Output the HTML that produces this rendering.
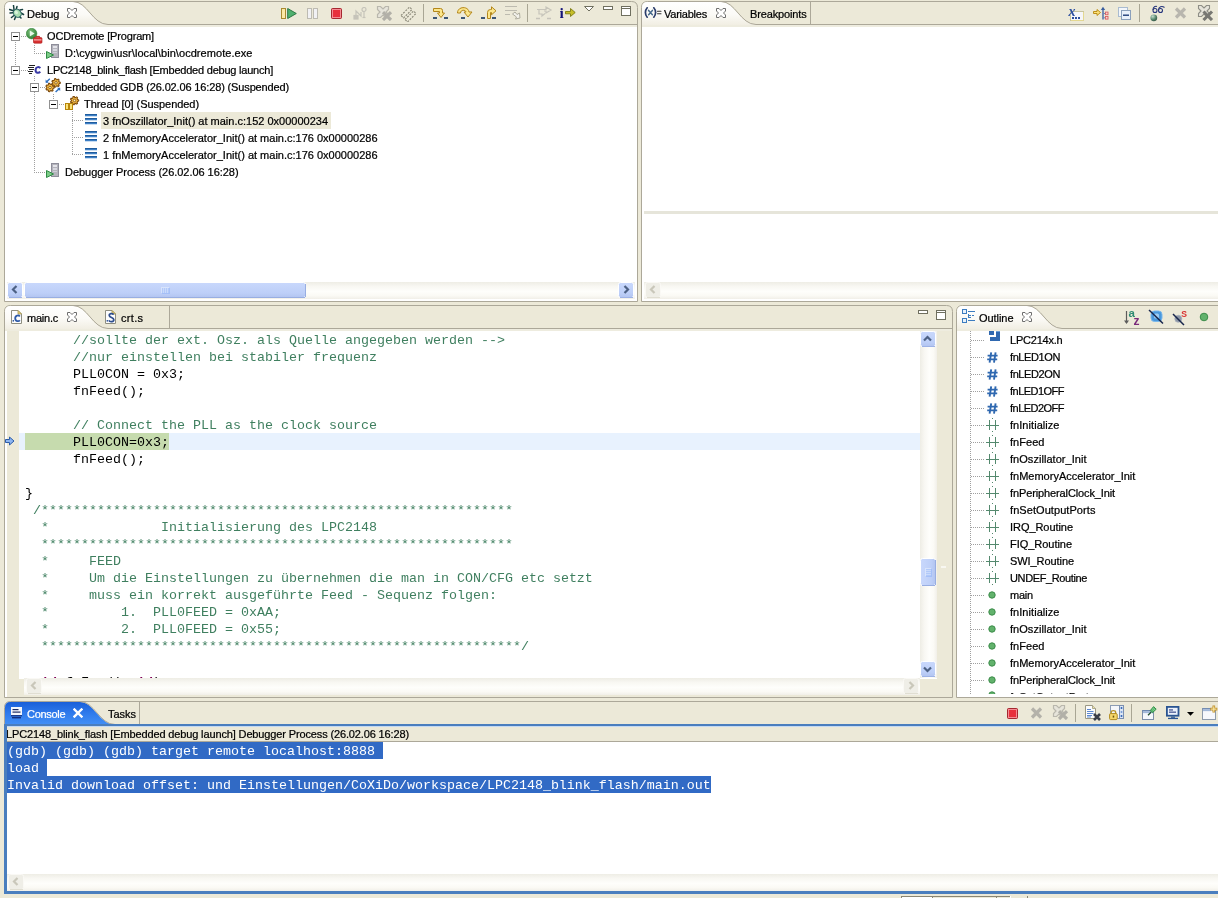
<!DOCTYPE html>
<html><head><meta charset="utf-8"><title>Debug - Eclipse</title>
<style>
html,body{margin:0;padding:0;}
body{width:1218px;height:898px;overflow:hidden;background:#ECE9D8;position:relative;font-family:"Liberation Sans",sans-serif;font-size:11px;color:#000;}
div,span,svg{position:absolute;box-sizing:border-box;}
.t{white-space:pre;line-height:13px;font-size:11px;-webkit-text-stroke:0.22px currentColor;}
.m{white-space:pre;font-family:"Liberation Mono",monospace;font-size:13.333px;line-height:17px;}
.panel{border:1px solid #ACA899;background:#fff;}
</style></head><body><div id="root" style="left:0;top:0;width:1218px;height:898px;will-change:transform;">
<svg width="0" height="0" style="left:0;top:0"><defs><linearGradient id="tg" x1="0" y1="0" x2="0" y2="1"><stop offset="0" stop-color="#ffffff"/><stop offset="0.55" stop-color="#FBFAF6"/><stop offset="1" stop-color="#F1EEE3"/></linearGradient><linearGradient id="bg" x1="0" y1="0" x2="0" y2="1"><stop offset="0" stop-color="#1A5FD9"/><stop offset="0.5" stop-color="#2F7BEC"/><stop offset="1" stop-color="#4390F6"/></linearGradient></defs></svg>
<svg style="left:4px;top:1px" width="634" height="301" viewBox="0 0 634 301"><path d="M0.5,300.5 L0.5,6.5 Q0.5,0.5 6.5,0.5 L627.5,0.5 Q633.5,0.5 633.5,6.5 L633.5,300.5 Z" fill="#ECE9D8" stroke="#ACA899" stroke-width="1"/><rect x="1" y="24" width="632" height="276" fill="#fff"/><rect x="1" y="24" width="632" height="2" fill="#EEECDF"/><path d="M1,24 L1,6.5 Q1,1 6.5,1 L69,1 C83,1 88,23.5 104,23.5 L104,24 Z" fill="url(#tg)"/><path d="M69,0.5 C83.5,0.5 88.5,23.5 104,23.5 L636,23.5" fill="none" stroke="#ACA899" stroke-width="1"/></svg>
<svg style="left:641px;top:1px" width="577" height="301" viewBox="0 0 577 301"><path d="M579,0.5 L6.5,0.5 Q0.5,0.5 0.5,6.5 L0.5,300.5 L579,300.5" fill="#ECE9D8" stroke="#ACA899" stroke-width="1"/><rect x="1" y="24" width="577" height="276" fill="#fff"/><rect x="1" y="24" width="577" height="2" fill="#EEECDF"/><path d="M1,24 L1,6.5 Q1,1 6.5,1 L80,1 C94,1 99,23.5 115,23.5 L115,24 Z" fill="url(#tg)"/><path d="M80,0.5 C94.5,0.5 99.5,23.5 115,23.5 L579,23.5" fill="none" stroke="#ACA899" stroke-width="1"/></svg>
<svg style="left:4px;top:305px" width="949" height="393" viewBox="0 0 949 393"><path d="M0.5,392.5 L0.5,6.5 Q0.5,0.5 6.5,0.5 L942.5,0.5 Q948.5,0.5 948.5,6.5 L948.5,392.5 Z" fill="#ECE9D8" stroke="#ACA899" stroke-width="1"/><rect x="1" y="24" width="947" height="368" fill="#fff"/><rect x="1" y="24" width="947" height="2" fill="#EEECDF"/><path d="M1,24 L1,6.5 Q1,1 6.5,1 L69,1 C83,1 88,23.5 104,23.5 L104,24 Z" fill="url(#tg)"/><path d="M69,0.5 C83.5,0.5 88.5,23.5 104,23.5 L951,23.5" fill="none" stroke="#ACA899" stroke-width="1"/></svg>
<svg style="left:956px;top:305px" width="262" height="393" viewBox="0 0 262 393"><path d="M264,0.5 L6.5,0.5 Q0.5,0.5 0.5,6.5 L0.5,392.5 L264,392.5" fill="#ECE9D8" stroke="#ACA899" stroke-width="1"/><rect x="1" y="24" width="262" height="368" fill="#fff"/><rect x="1" y="24" width="262" height="2" fill="#EEECDF"/><path d="M1,24 L1,6.5 Q1,1 6.5,1 L71,1 C85,1 90,23.5 106,23.5 L106,24 Z" fill="url(#tg)"/><path d="M71,0.5 C85.5,0.5 90.5,23.5 106,23.5 L264,23.5" fill="none" stroke="#ACA899" stroke-width="1"/></svg>
<svg style="left:4px;top:701px" width="1214" height="193" viewBox="0 0 1214 193"><path d="M1216,0.5 L6.5,0.5 Q0.5,0.5 0.5,6.5 L0.5,192.5 L1216,192.5" fill="#ECE9D8" stroke="#ACA899" stroke-width="1"/><rect x="1" y="24" width="1214" height="168" fill="#fff"/><rect x="1" y="24" width="1214" height="2" fill="#EEECDF"/><path d="M1,24 L1,6.5 Q1,1 6.5,1 L76,1 C90,1 95,23.5 111,23.5 L111,24 Z" fill="url(#bg)"/><path d="M76,0.5 C90.5,0.5 95.5,23.5 111,23.5 L1216,23.5" fill="none" stroke="#ACA899" stroke-width="1"/></svg>
<span class="t" style="left:27px;top:8px;">Debug</span>
<svg style="left:67px;top:8px" width="10" height="10" viewBox="0 0 10 10"><path d="M0.5,0.5 H3 L5,2.5 L7,0.5 H9.5 V3 L7.5,5 L9.5,7 V9.5 H7 L5,7.5 L3,9.5 H0.5 V7 L2.5,5 L0.5,3 Z" fill="#fff" stroke="#6E6E6E" stroke-width="1" transform="scale(1.0)"/></svg>
<span class="t" style="left:664px;top:8px;letter-spacing:-0.227px;">Variables</span>
<svg style="left:716px;top:8px" width="10" height="10" viewBox="0 0 10 10"><path d="M0.5,0.5 H3 L5,2.5 L7,0.5 H9.5 V3 L7.5,5 L9.5,7 V9.5 H7 L5,7.5 L3,9.5 H0.5 V7 L2.5,5 L0.5,3 Z" fill="#fff" stroke="#6E6E6E" stroke-width="1" transform="scale(1.0)"/></svg>
<span class="t" style="left:750px;top:8px;letter-spacing:-0.145px;">Breakpoints</span>
<div style="left:810px;top:2px;width:1px;height:22px;background:#ACA899;"></div>
<span class="t" style="left:27px;top:312px;letter-spacing:-0.234px;">main.c</span>
<svg style="left:67px;top:312px" width="10" height="10" viewBox="0 0 10 10"><path d="M0.5,0.5 H3 L5,2.5 L7,0.5 H9.5 V3 L7.5,5 L9.5,7 V9.5 H7 L5,7.5 L3,9.5 H0.5 V7 L2.5,5 L0.5,3 Z" fill="#fff" stroke="#6E6E6E" stroke-width="1" transform="scale(1.0)"/></svg>
<span class="t" style="left:121px;top:312px;letter-spacing:0.304px;">crt.s</span>
<div style="left:169px;top:306px;width:1px;height:22px;background:#ACA899;"></div>
<span class="t" style="left:979px;top:312px;letter-spacing:-0.051px;">Outline</span>
<svg style="left:1022px;top:312px" width="10" height="10" viewBox="0 0 10 10"><path d="M0.5,0.5 H3 L5,2.5 L7,0.5 H9.5 V3 L7.5,5 L9.5,7 V9.5 H7 L5,7.5 L3,9.5 H0.5 V7 L2.5,5 L0.5,3 Z" fill="#fff" stroke="#6E6E6E" stroke-width="1" transform="scale(1.0)"/></svg>
<span class="t" style="left:27px;top:708px;color:#fff;letter-spacing:-0.294px;">Console</span>
<svg style="left:73px;top:708px" width="10" height="10" viewBox="0 0 10 10"><path d="M1.5,1.5 L8.5,8.5 M8.5,1.5 L1.5,8.5" stroke="#fff" stroke-width="2.4" stroke-linecap="square"/></svg>
<span class="t" style="left:108px;top:708px;letter-spacing:-0.025px;">Tasks</span>
<div style="left:139px;top:702px;width:1px;height:22px;background:#ACA899;"></div>
<div style="left:101px;top:112px;width:230px;height:17px;background:#ECE9D8;"></div>
<span class="t" style="left:47px;top:30px;letter-spacing:-0.16px;">OCDremote [Program]</span>
<span class="t" style="left:65px;top:47px;letter-spacing:0.061px;">D:\cygwin\usr\local\bin\ocdremote.exe</span>
<span class="t" style="left:47px;top:64px;letter-spacing:-0.22px;">LPC2148_blink_flash [Embedded debug launch]</span>
<span class="t" style="left:65px;top:81px;letter-spacing:-0.145px;">Embedded GDB (26.02.06 16:28) (Suspended)</span>
<span class="t" style="left:84px;top:98px;letter-spacing:-0.054px;">Thread [0] (Suspended)</span>
<span class="t" style="left:103px;top:115px;">3 fnOszillator_Init() at main.c:152 0x00000234</span>
<span class="t" style="left:103px;top:132px;">2 fnMemoryAccelerator_Init() at main.c:176 0x00000286</span>
<span class="t" style="left:103px;top:149px;">1 fnMemoryAccelerator_Init() at main.c:176 0x00000286</span>
<span class="t" style="left:65px;top:166px;letter-spacing:-0.042px;">Debugger Process (26.02.06 16:28)</span>
<svg style="left:11px;top:32px" width="9" height="9" viewBox="0 0 9 9" shape-rendering="crispEdges"><rect x="0.5" y="0.5" width="8" height="8" fill="#fff" stroke="#919191"/><rect x="2" y="4" width="5" height="1" fill="#000"/></svg>
<svg style="left:11px;top:66px" width="9" height="9" viewBox="0 0 9 9" shape-rendering="crispEdges"><rect x="0.5" y="0.5" width="8" height="8" fill="#fff" stroke="#919191"/><rect x="2" y="4" width="5" height="1" fill="#000"/></svg>
<svg style="left:30px;top:83px" width="9" height="9" viewBox="0 0 9 9" shape-rendering="crispEdges"><rect x="0.5" y="0.5" width="8" height="8" fill="#fff" stroke="#919191"/><rect x="2" y="4" width="5" height="1" fill="#000"/></svg>
<svg style="left:49px;top:100px" width="9" height="9" viewBox="0 0 9 9" shape-rendering="crispEdges"><rect x="0.5" y="0.5" width="8" height="8" fill="#fff" stroke="#919191"/><rect x="2" y="4" width="5" height="1" fill="#000"/></svg>
<div style="left:21px;top:36px;width:8px;height:1px;background:repeating-linear-gradient(90deg,#A0A0A0 0 1px,transparent 1px 2px);"></div>
<div style="left:21px;top:70px;width:8px;height:1px;background:repeating-linear-gradient(90deg,#A0A0A0 0 1px,transparent 1px 2px);"></div>
<div style="left:40px;top:87px;width:6px;height:1px;background:repeating-linear-gradient(90deg,#A0A0A0 0 1px,transparent 1px 2px);"></div>
<div style="left:59px;top:104px;width:6px;height:1px;background:repeating-linear-gradient(90deg,#A0A0A0 0 1px,transparent 1px 2px);"></div>
<div style="left:15px;top:42px;width:1px;height:24px;background:repeating-linear-gradient(180deg,#A0A0A0 0 1px,transparent 1px 2px);"></div>
<div style="left:34px;top:45px;width:1px;height:8px;background:repeating-linear-gradient(180deg,#A0A0A0 0 1px,transparent 1px 2px);"></div>
<div style="left:34px;top:53px;width:12px;height:1px;background:repeating-linear-gradient(90deg,#A0A0A0 0 1px,transparent 1px 2px);"></div>
<div style="left:34px;top:76px;width:1px;height:6px;background:repeating-linear-gradient(180deg,#A0A0A0 0 1px,transparent 1px 2px);"></div>
<div style="left:34px;top:92px;width:1px;height:80px;background:repeating-linear-gradient(180deg,#A0A0A0 0 1px,transparent 1px 2px);"></div>
<div style="left:34px;top:172px;width:12px;height:1px;background:repeating-linear-gradient(90deg,#A0A0A0 0 1px,transparent 1px 2px);"></div>
<div style="left:53px;top:94px;width:1px;height:6px;background:repeating-linear-gradient(180deg,#A0A0A0 0 1px,transparent 1px 2px);"></div>
<div style="left:72px;top:111px;width:1px;height:44px;background:repeating-linear-gradient(180deg,#A0A0A0 0 1px,transparent 1px 2px);"></div>
<div style="left:72px;top:120px;width:12px;height:1px;background:repeating-linear-gradient(90deg,#A0A0A0 0 1px,transparent 1px 2px);"></div>
<div style="left:72px;top:137px;width:12px;height:1px;background:repeating-linear-gradient(90deg,#A0A0A0 0 1px,transparent 1px 2px);"></div>
<div style="left:72px;top:154px;width:12px;height:1px;background:repeating-linear-gradient(90deg,#A0A0A0 0 1px,transparent 1px 2px);"></div>
<div style="left:7px;top:331px;width:12px;height:348px;background:#ECE9D8;"></div>
<div style="left:937px;top:331px;width:15px;height:366px;background:#ECE9D8;"></div>
<div style="left:7px;top:679px;width:930px;height:18px;background:#ECE9D8;"></div>
<div style="left:19px;top:433px;width:901px;height:17px;background:#E8F2FE;"></div>
<div style="left:25px;top:433px;width:144px;height:17px;background:#C6DBAE;"></div>
<span class="m" style="left:25px;top:332px;color:#3F7F5F;">      //sollte der ext. Osz. als Quelle angegeben werden --&gt;</span>
<span class="m" style="left:25px;top:349px;color:#3F7F5F;">      //nur einstellen bei stabiler frequenz</span>
<span class="m" style="left:25px;top:366px;color:#000;">      PLL0CON = 0x3;</span>
<span class="m" style="left:25px;top:383px;color:#000;">      fnFeed();</span>
<span class="m" style="left:25px;top:417px;color:#3F7F5F;">      // Connect the PLL as the clock source</span>
<span class="m" style="left:25px;top:434px;color:#000;">      PLL0CON=0x3;</span>
<span class="m" style="left:25px;top:451px;color:#000;">      fnFeed();</span>
<span class="m" style="left:25px;top:485px;color:#000;">}</span>
<span class="m" style="left:25px;top:502px;color:#3F7F5F;"> /***********************************************************</span>
<span class="m" style="left:25px;top:519px;color:#3F7F5F;">  *              Initialisierung des LPC2148</span>
<span class="m" style="left:25px;top:536px;color:#3F7F5F;">  ***********************************************************</span>
<span class="m" style="left:25px;top:553px;color:#3F7F5F;">  *     FEED</span>
<span class="m" style="left:25px;top:570px;color:#3F7F5F;">  *     Um die Einstellungen zu übernehmen die man in CON/CFG etc setzt</span>
<span class="m" style="left:25px;top:587px;color:#3F7F5F;">  *     muss ein korrekt ausgeführte Feed - Sequenz folgen:</span>
<span class="m" style="left:25px;top:604px;color:#3F7F5F;">  *         1.  PLL0FEED = 0xAA;</span>
<span class="m" style="left:25px;top:621px;color:#3F7F5F;">  *         2.  PLL0FEED = 0x55;</span>
<span class="m" style="left:25px;top:638px;color:#3F7F5F;">  ************************************************************/</span>
<div style="left:25px;top:672px;width:400px;height:7px;overflow:hidden;"><span class="m" style="left:0;top:2px;"><b style="color:#7F0055">void</b> fnFeed(<b style="color:#7F0055">void</b>)</span></div>
<span class="t" style="left:1010px;top:334px;letter-spacing:-0.215px;">LPC214x.h</span>
<span class="t" style="left:1010px;top:351px;letter-spacing:-0.4px;">fnLED1ON</span>
<span class="t" style="left:1010px;top:368px;letter-spacing:-0.4px;">fnLED2ON</span>
<span class="t" style="left:1010px;top:385px;letter-spacing:-0.521px;">fnLED1OFF</span>
<span class="t" style="left:1010px;top:402px;letter-spacing:-0.521px;">fnLED2OFF</span>
<span class="t" style="left:1010px;top:419px;letter-spacing:0.048px;">fnInitialize</span>
<span class="t" style="left:1010px;top:436px;letter-spacing:0.042px;">fnFeed</span>
<span class="t" style="left:1010px;top:453px;letter-spacing:0.04px;">fnOszillator_Init</span>
<span class="t" style="left:1010px;top:470px;">fnMemoryAccelerator_Init</span>
<span class="t" style="left:1010px;top:487px;letter-spacing:-0.119px;">fnPeripheralClock_Init</span>
<span class="t" style="left:1010px;top:504px;letter-spacing:0.069px;">fnSetOutputPorts</span>
<span class="t" style="left:1010px;top:521px;letter-spacing:-0.054px;">IRQ_Routine</span>
<span class="t" style="left:1010px;top:538px;letter-spacing:-0.034px;">FIQ_Routine</span>
<span class="t" style="left:1010px;top:555px;letter-spacing:-0.074px;">SWI_Routine</span>
<span class="t" style="left:1010px;top:572px;letter-spacing:-0.379px;">UNDEF_Routine</span>
<span class="t" style="left:1010px;top:589px;letter-spacing:-0.211px;">main</span>
<span class="t" style="left:1010px;top:606px;letter-spacing:0.048px;">fnInitialize</span>
<span class="t" style="left:1010px;top:623px;letter-spacing:0.04px;">fnOszillator_Init</span>
<span class="t" style="left:1010px;top:640px;letter-spacing:0.042px;">fnFeed</span>
<span class="t" style="left:1010px;top:657px;">fnMemoryAccelerator_Init</span>
<span class="t" style="left:1010px;top:674px;letter-spacing:-0.119px;">fnPeripheralClock_Init</span>
<div style="left:960px;top:688px;width:250px;height:6px;overflow:hidden;"><span class="t" style="left:50px;top:3px;">fnSetOutputPorts</span></div>
<div style="left:970px;top:331px;width:1px;height:364px;background:repeating-linear-gradient(180deg,#A0A0A0 0 1px,transparent 1px 2px);"></div>
<div style="left:971px;top:340px;width:14px;height:1px;background:repeating-linear-gradient(90deg,#A0A0A0 0 1px,transparent 1px 2px);"></div>
<div style="left:971px;top:357px;width:14px;height:1px;background:repeating-linear-gradient(90deg,#A0A0A0 0 1px,transparent 1px 2px);"></div>
<div style="left:971px;top:374px;width:14px;height:1px;background:repeating-linear-gradient(90deg,#A0A0A0 0 1px,transparent 1px 2px);"></div>
<div style="left:971px;top:391px;width:14px;height:1px;background:repeating-linear-gradient(90deg,#A0A0A0 0 1px,transparent 1px 2px);"></div>
<div style="left:971px;top:408px;width:14px;height:1px;background:repeating-linear-gradient(90deg,#A0A0A0 0 1px,transparent 1px 2px);"></div>
<div style="left:971px;top:425px;width:14px;height:1px;background:repeating-linear-gradient(90deg,#A0A0A0 0 1px,transparent 1px 2px);"></div>
<div style="left:971px;top:442px;width:14px;height:1px;background:repeating-linear-gradient(90deg,#A0A0A0 0 1px,transparent 1px 2px);"></div>
<div style="left:971px;top:459px;width:14px;height:1px;background:repeating-linear-gradient(90deg,#A0A0A0 0 1px,transparent 1px 2px);"></div>
<div style="left:971px;top:476px;width:14px;height:1px;background:repeating-linear-gradient(90deg,#A0A0A0 0 1px,transparent 1px 2px);"></div>
<div style="left:971px;top:493px;width:14px;height:1px;background:repeating-linear-gradient(90deg,#A0A0A0 0 1px,transparent 1px 2px);"></div>
<div style="left:971px;top:510px;width:14px;height:1px;background:repeating-linear-gradient(90deg,#A0A0A0 0 1px,transparent 1px 2px);"></div>
<div style="left:971px;top:527px;width:14px;height:1px;background:repeating-linear-gradient(90deg,#A0A0A0 0 1px,transparent 1px 2px);"></div>
<div style="left:971px;top:544px;width:14px;height:1px;background:repeating-linear-gradient(90deg,#A0A0A0 0 1px,transparent 1px 2px);"></div>
<div style="left:971px;top:561px;width:14px;height:1px;background:repeating-linear-gradient(90deg,#A0A0A0 0 1px,transparent 1px 2px);"></div>
<div style="left:971px;top:578px;width:14px;height:1px;background:repeating-linear-gradient(90deg,#A0A0A0 0 1px,transparent 1px 2px);"></div>
<div style="left:971px;top:595px;width:14px;height:1px;background:repeating-linear-gradient(90deg,#A0A0A0 0 1px,transparent 1px 2px);"></div>
<div style="left:971px;top:612px;width:14px;height:1px;background:repeating-linear-gradient(90deg,#A0A0A0 0 1px,transparent 1px 2px);"></div>
<div style="left:971px;top:629px;width:14px;height:1px;background:repeating-linear-gradient(90deg,#A0A0A0 0 1px,transparent 1px 2px);"></div>
<div style="left:971px;top:646px;width:14px;height:1px;background:repeating-linear-gradient(90deg,#A0A0A0 0 1px,transparent 1px 2px);"></div>
<div style="left:971px;top:663px;width:14px;height:1px;background:repeating-linear-gradient(90deg,#A0A0A0 0 1px,transparent 1px 2px);"></div>
<div style="left:971px;top:680px;width:14px;height:1px;background:repeating-linear-gradient(90deg,#A0A0A0 0 1px,transparent 1px 2px);"></div>
<div style="left:7px;top:727px;width:1211px;height:15px;background:#ECE9D8;border-bottom:1px solid #ACA899;"></div>
<span class="t" style="left:6px;top:728px;letter-spacing:-0.135px;">LPC2148_blink_flash [Embedded debug launch] Debugger Process (26.02.06 16:28)</span>
<div style="left:7px;top:742px;width:376px;height:17px;background:#316AC5;"></div>
<span class="m" style="left:7px;top:743px;color:#fff;">(gdb) (gdb) (gdb) target remote localhost:8888</span>
<div style="left:7px;top:759px;width:40px;height:17px;background:#316AC5;"></div>
<span class="m" style="left:7px;top:760px;color:#fff;">load</span>
<div style="left:7px;top:776px;width:704px;height:17px;background:#316AC5;"></div>
<span class="m" style="left:7px;top:777px;color:#fff;">Invalid download offset: und Einstellungen/CoXiDo/workspace/LPC2148_blink_flash/main.out</span>
<div style="left:4px;top:724px;width:1214px;height:2px;background:#4A7EBE;"></div>
<div style="left:4px;top:726px;width:1214px;height:1px;background:#C3D9F4;"></div>
<div style="left:4px;top:724px;width:3px;height:170px;background:#4A7EBE;"></div>
<div style="left:4px;top:891px;width:1214px;height:3px;background:#4A7EBE;"></div>
<svg width="0" height="0" style="left:0;top:0"><defs><linearGradient id="sbh" x1="0" y1="0" x2="0" y2="1"><stop offset="0" stop-color="#C9D8FC"/><stop offset="0.7" stop-color="#BDCFF8"/><stop offset="1" stop-color="#B2C4F0"/></linearGradient><linearGradient id="sbv" x1="0" y1="0" x2="1" y2="0"><stop offset="0" stop-color="#C9D8FC"/><stop offset="0.7" stop-color="#BDCFF8"/><stop offset="1" stop-color="#B2C4F0"/></linearGradient></defs></svg>
<div style="left:7px;top:282px;width:628px;height:17px;background:linear-gradient(180deg,#EEEDE5 0%,#F8F7F2 25%,#FEFEFB 55%,#FBFAF5 80%,#F1EFE8 100%);"></div>
<svg style="left:7px;top:282px" width="17" height="17" viewBox="0 0 17 17"><rect x="0.5" y="0.5" width="15" height="15" rx="2" fill="url(#sbh)" stroke="#fff"/><path d="M2,15.5 H15" stroke="#9DB2E6" stroke-width="1" fill="none"/><path d="M10,4.5 L6.5,8 L10,11.5" fill="none" stroke="#4D6185" stroke-width="2.2" transform="translate(-0.5,-0.5)"/></svg>
<svg style="left:618px;top:282px" width="17" height="17" viewBox="0 0 17 17"><rect x="0.5" y="0.5" width="15" height="15" rx="2" fill="url(#sbh)" stroke="#fff"/><path d="M2,15.5 H15" stroke="#9DB2E6" stroke-width="1" fill="none"/><path d="M7,4.5 L10.5,8 L7,11.5" fill="none" stroke="#4D6185" stroke-width="2.2" transform="translate(-0.5,-0.5)"/></svg>
<svg style="left:24px;top:282px" width="283" height="17" viewBox="0 0 283 17"><rect x="0.5" y="0.5" width="281" height="15" rx="2" fill="url(#sbh)" stroke="#fff"/><path d="M2,15.5 H281 M281.5,2 V15" stroke="#98AEE2" stroke-width="1" fill="none"/><rect x="137.5" y="5" width="1" height="6" fill="#EEF4FE"/><rect x="138.5" y="6" width="1" height="6" fill="#8CB0F8"/><rect x="139.5" y="5" width="1" height="6" fill="#EEF4FE"/><rect x="140.5" y="6" width="1" height="6" fill="#8CB0F8"/><rect x="141.5" y="5" width="1" height="6" fill="#EEF4FE"/><rect x="142.5" y="6" width="1" height="6" fill="#8CB0F8"/><rect x="143.5" y="5" width="1" height="6" fill="#EEF4FE"/><rect x="144.5" y="6" width="1" height="6" fill="#8CB0F8"/></svg>
<div style="left:644px;top:211px;width:580px;height:3px;background:#E6E5DA;"></div>
<div style="left:644px;top:282px;width:580px;height:17px;background:linear-gradient(180deg,#EEEDE5 0%,#F8F7F2 25%,#FEFEFB 55%,#FBFAF5 80%,#F1EFE8 100%);"></div>
<svg style="left:645px;top:282px" width="17" height="17" viewBox="0 0 17 17"><rect x="0.5" y="0.5" width="15" height="15" rx="2" fill="#EFEEE7" stroke="#FAF9F5"/><path d="M2,15.5 H15" stroke="#E0DED2" stroke-width="1" fill="none"/><path d="M10,4.5 L6.5,8 L10,11.5" fill="none" stroke="#C9C7BA" stroke-width="2.2" transform="translate(-0.5,-0.5)"/></svg>
<div style="left:920px;top:331px;width:17px;height:347px;background:linear-gradient(90deg,#EEEDE5 0%,#F8F7F2 25%,#FEFEFB 55%,#FBFAF5 80%,#F1EFE8 100%);"></div>
<svg style="left:920px;top:331px" width="17" height="17" viewBox="0 0 17 17"><rect x="0.5" y="0.5" width="15" height="15" rx="2" fill="url(#sbh)" stroke="#fff"/><path d="M2,15.5 H15" stroke="#9DB2E6" stroke-width="1" fill="none"/><path d="M4.5,10 L8,6.5 L11.5,10" fill="none" stroke="#4D6185" stroke-width="2.2" transform="translate(-0.5,-0.5)"/></svg>
<svg style="left:920px;top:661px" width="17" height="17" viewBox="0 0 17 17"><rect x="0.5" y="0.5" width="15" height="15" rx="2" fill="url(#sbh)" stroke="#fff"/><path d="M2,15.5 H15" stroke="#9DB2E6" stroke-width="1" fill="none"/><path d="M4.5,7 L8,10.5 L11.5,7" fill="none" stroke="#4D6185" stroke-width="2.2" transform="translate(-0.5,-0.5)"/></svg>
<svg style="left:920px;top:558px" width="17" height="29" viewBox="0 0 17 29"><rect x="0.5" y="0.5" width="15" height="27" rx="2" fill="url(#sbv)" stroke="#fff"/><path d="M2,27.5 H15 M15.5,2 V27" stroke="#98AEE2" stroke-width="1" fill="none"/><rect y="10.5" x="5" height="1" width="6" fill="#EEF4FE"/><rect y="11.5" x="6" height="1" width="6" fill="#8CB0F8"/><rect y="12.5" x="5" height="1" width="6" fill="#EEF4FE"/><rect y="13.5" x="6" height="1" width="6" fill="#8CB0F8"/><rect y="14.5" x="5" height="1" width="6" fill="#EEF4FE"/><rect y="15.5" x="6" height="1" width="6" fill="#8CB0F8"/><rect y="16.5" x="5" height="1" width="6" fill="#EEF4FE"/><rect y="17.5" x="6" height="1" width="6" fill="#8CB0F8"/></svg>
<div style="left:24px;top:678px;width:896px;height:17px;background:linear-gradient(180deg,#EEEDE5 0%,#F8F7F2 25%,#FEFEFB 55%,#FBFAF5 80%,#F1EFE8 100%);"></div>
<svg style="left:26px;top:678px" width="17" height="17" viewBox="0 0 17 17"><rect x="0.5" y="0.5" width="15" height="15" rx="2" fill="#EFEEE7" stroke="#FAF9F5"/><path d="M2,15.5 H15" stroke="#E0DED2" stroke-width="1" fill="none"/><path d="M10,4.5 L6.5,8 L10,11.5" fill="none" stroke="#C9C7BA" stroke-width="2.2" transform="translate(-0.5,-0.5)"/></svg>
<svg style="left:903px;top:678px" width="17" height="17" viewBox="0 0 17 17"><rect x="0.5" y="0.5" width="15" height="15" rx="2" fill="#EFEEE7" stroke="#FAF9F5"/><path d="M2,15.5 H15" stroke="#E0DED2" stroke-width="1" fill="none"/><path d="M7,4.5 L10.5,8 L7,11.5" fill="none" stroke="#C9C7BA" stroke-width="2.2" transform="translate(-0.5,-0.5)"/></svg>
<div style="left:941px;top:566px;width:5px;height:2px;background:#F8F7F1;"></div>
<div style="left:7px;top:874px;width:1211px;height:17px;background:linear-gradient(180deg,#EEEDE5 0%,#F8F7F2 25%,#FEFEFB 55%,#FBFAF5 80%,#F1EFE8 100%);"></div>
<svg style="left:8px;top:874px" width="17" height="17" viewBox="0 0 17 17"><rect x="0.5" y="0.5" width="15" height="15" rx="2" fill="#EFEEE7" stroke="#FAF9F5"/><path d="M2,15.5 H15" stroke="#E0DED2" stroke-width="1" fill="none"/><path d="M10,4.5 L6.5,8 L10,11.5" fill="none" stroke="#C9C7BA" stroke-width="2.2" transform="translate(-0.5,-0.5)"/></svg>
<svg style="left:9px;top:5px" width="16" height="16" viewBox="0 0 16 16"><g stroke="#173F3F" stroke-width="1.5" stroke-linecap="round" fill="none"><path d="M4.5,0.5 L5,4.5 M8,1.5 L7.2,4.5 M0.5,4.5 L4.5,5.8 M1,8 L4,7.8 M2.5,12.5 L5,10.5 M5.5,14.5 L6.5,12 M11,5 L13.5,4.5 M12,8 L14.5,9.5 M10.5,11.5 L12,13"/></g><ellipse cx="8.3" cy="8.3" rx="3.6" ry="4.3" transform="rotate(-40 8.3 8.3)" fill="#A9DDB0" stroke="#2B6464" stroke-width="1"/><ellipse cx="7.3" cy="7.3" rx="1.5" ry="2" transform="rotate(-40 7.3 7.3)" fill="#D8F2DC"/></svg>
<svg style="left:26px;top:28px" width="17" height="16" viewBox="0 0 17 16"><defs><radialGradient id="gc" cx="0.4" cy="0.35" r="0.7"><stop offset="0" stop-color="#7CC07C"/><stop offset="1" stop-color="#2E7D32"/></radialGradient></defs><circle cx="5.6" cy="5.6" r="5.3" fill="url(#gc)" stroke="#3C8C40" stroke-width="0.6"/><path d="M3.8,2.6 L8.6,5.6 L3.8,8.6 Z" fill="#E8F8E8"/><rect x="7.5" y="9.6" width="8.5" height="5.6" rx="1" fill="#D83030" stroke="#A81818" stroke-width="0.6"/><path d="M10,9.6 V8.4 H13.5 V9.6" fill="none" stroke="#C02020" stroke-width="1"/><rect x="8" y="11.3" width="7.5" height="1.2" fill="#F7B0B0"/></svg>
<svg style="left:46px;top:44px" width="14" height="16" viewBox="0 0 14 16"><rect x="5.5" y="0.5" width="7" height="13" fill="#B4B4BC" stroke="#8E8E9A" stroke-width="1"/><rect x="7" y="2" width="4" height="2" fill="#E4E4EA"/><rect x="7" y="5" width="4" height="2" fill="#D8D8E0"/><rect x="7" y="8" width="4" height="1" fill="#CFCFD8"/><path d="M0.5,7.5 L7.5,11 L0.5,14.5 Z" fill="#7CCB86" stroke="#2E8B44" stroke-width="1"/></svg>
<svg style="left:46px;top:163px" width="14" height="16" viewBox="0 0 14 16"><rect x="5.5" y="0.5" width="7" height="13" fill="#B4B4BC" stroke="#8E8E9A" stroke-width="1"/><rect x="7" y="2" width="4" height="2" fill="#E4E4EA"/><rect x="7" y="5" width="4" height="2" fill="#D8D8E0"/><rect x="7" y="8" width="4" height="1" fill="#CFCFD8"/><path d="M0.5,7.5 L7.5,11 L0.5,14.5 Z" fill="#7CCB86" stroke="#2E8B44" stroke-width="1"/></svg>
<svg style="left:28px;top:65px" width="14" height="10" viewBox="0 0 14 10"><g fill="#222"><rect x="1" y="0" width="6" height="1"/><rect x="0" y="2" width="6" height="1"/><rect x="1" y="4" width="5" height="1"/><rect x="0" y="6" width="5" height="1"/><rect x="1" y="8" width="3" height="1"/></g><path d="M12.2,3.2 C11.4,1.6 8,1.4 7.6,4.8 C7.3,8.2 10.8,8.6 12.2,6.6" fill="none" stroke="#3B3BA6" stroke-width="2"/></svg>
<svg style="left:45px;top:78px" width="16" height="15" viewBox="0 0 16 15"><path d="M9.26,8.94 L9.26,10.06 L8.02,10.50 L7.66,11.24 L8.09,12.49 L7.22,13.18 L6.10,12.48 L5.30,12.67 L4.59,13.78 L3.51,13.53 L3.36,12.22 L2.71,11.71 L1.40,11.85 L0.92,10.85 L1.84,9.91 L1.84,9.09 L0.92,8.15 L1.40,7.15 L2.71,7.29 L3.36,6.78 L3.51,5.47 L4.59,5.22 L5.30,6.33 L6.10,6.52 L7.22,5.82 L8.09,6.51 L7.66,7.76 L8.02,8.50 Z" fill="#F6BC42" stroke="#7C4A0C" stroke-width="1.1" stroke-linejoin="round"/><circle cx="5" cy="9.5" r="1.29" fill="#FFF0B8" stroke="#7C4A0C" stroke-width="0.8"/><path d="M15.26,4.24 L15.26,5.36 L14.02,5.80 L13.66,6.54 L14.09,7.79 L13.22,8.48 L12.10,7.78 L11.30,7.97 L10.59,9.08 L9.51,8.83 L9.36,7.52 L8.71,7.01 L7.40,7.15 L6.92,6.15 L7.84,5.21 L7.84,4.39 L6.92,3.45 L7.40,2.45 L8.71,2.59 L9.36,2.08 L9.51,0.77 L10.59,0.52 L11.30,1.63 L12.10,1.82 L13.22,1.12 L14.09,1.81 L13.66,3.06 L14.02,3.80 Z" fill="#F6BC42" stroke="#7C4A0C" stroke-width="1.1" stroke-linejoin="round"/><circle cx="11" cy="4.8" r="1.29" fill="#FFF0B8" stroke="#7C4A0C" stroke-width="0.8"/><path d="M4.8,0.8 L1.2,4.2" stroke="#2D6FC0" stroke-width="1.4" fill="none"/><path d="M0.6,1.6 V4.8 H3.8 Z" fill="#2D6FC0"/><path d="M10.6,14 L14.4,10.4" stroke="#2D6FC0" stroke-width="1.4" fill="none"/><path d="M15.2,13 V9.8 H12 Z" fill="#2D6FC0"/></svg>
<svg style="left:65px;top:96px" width="15" height="15" viewBox="0 0 15 15"><path d="M13.66,3.96 L13.66,5.04 L12.45,5.47 L12.10,6.20 L12.52,7.42 L11.67,8.10 L10.58,7.41 L9.79,7.59 L9.10,8.68 L8.04,8.44 L7.89,7.16 L7.26,6.66 L5.98,6.80 L5.51,5.82 L6.42,4.90 L6.42,4.10 L5.51,3.18 L5.98,2.20 L7.26,2.34 L7.89,1.84 L8.04,0.56 L9.10,0.32 L9.79,1.41 L10.58,1.59 L11.67,0.90 L12.52,1.58 L12.10,2.80 L12.45,3.53 Z" fill="#F6BC42" stroke="#7C4A0C" stroke-width="1.1" stroke-linejoin="round"/><circle cx="9.5" cy="4.5" r="1.26" fill="#FFF0B8" stroke="#7C4A0C" stroke-width="0.8"/><rect x="0.5" y="7.5" width="3" height="6" fill="#FBE27A" stroke="#B8860B" stroke-width="1"/><rect x="4.5" y="7.5" width="3" height="6" fill="#FBE27A" stroke="#B8860B" stroke-width="1"/></svg>
<svg style="left:85px;top:114px" width="12" height="11" viewBox="0 0 12 11" shape-rendering="crispEdges"><rect x="0" y="0" width="12" height="1" fill="#1F5C9E"/><rect x="0" y="1" width="12" height="1" fill="#3C7EC4"/><rect x="0" y="2" width="12" height="1" fill="#C9DDF2"/><rect x="0" y="4" width="12" height="1" fill="#1F5C9E"/><rect x="0" y="5" width="12" height="1" fill="#3C7EC4"/><rect x="0" y="6" width="12" height="1" fill="#C9DDF2"/><rect x="0" y="8" width="12" height="1" fill="#1F5C9E"/><rect x="0" y="9" width="12" height="1" fill="#3C7EC4"/><rect x="0" y="10" width="12" height="1" fill="#C9DDF2"/></svg>
<svg style="left:85px;top:131px" width="12" height="11" viewBox="0 0 12 11" shape-rendering="crispEdges"><rect x="0" y="0" width="12" height="1" fill="#1F5C9E"/><rect x="0" y="1" width="12" height="1" fill="#3C7EC4"/><rect x="0" y="2" width="12" height="1" fill="#C9DDF2"/><rect x="0" y="4" width="12" height="1" fill="#1F5C9E"/><rect x="0" y="5" width="12" height="1" fill="#3C7EC4"/><rect x="0" y="6" width="12" height="1" fill="#C9DDF2"/><rect x="0" y="8" width="12" height="1" fill="#1F5C9E"/><rect x="0" y="9" width="12" height="1" fill="#3C7EC4"/><rect x="0" y="10" width="12" height="1" fill="#C9DDF2"/></svg>
<svg style="left:85px;top:148px" width="12" height="11" viewBox="0 0 12 11" shape-rendering="crispEdges"><rect x="0" y="0" width="12" height="1" fill="#1F5C9E"/><rect x="0" y="1" width="12" height="1" fill="#3C7EC4"/><rect x="0" y="2" width="12" height="1" fill="#C9DDF2"/><rect x="0" y="4" width="12" height="1" fill="#1F5C9E"/><rect x="0" y="5" width="12" height="1" fill="#3C7EC4"/><rect x="0" y="6" width="12" height="1" fill="#C9DDF2"/><rect x="0" y="8" width="12" height="1" fill="#1F5C9E"/><rect x="0" y="9" width="12" height="1" fill="#3C7EC4"/><rect x="0" y="10" width="12" height="1" fill="#C9DDF2"/></svg>
<svg style="left:281px;top:8px" width="16" height="11" viewBox="0 0 16 11"><rect x="0.5" y="0.5" width="4" height="10" fill="#FBE9A6" stroke="#A88A30"/><path d="M6.7,0.5 L15.3,5.5 L6.7,10.5 Z" fill="#4FB06E" stroke="#2C7844" stroke-width="1" stroke-linejoin="round"/></svg>
<svg style="left:307px;top:8px" width="12" height="11" viewBox="0 0 12 11"><rect x="0.5" y="0.5" width="4" height="10" fill="#F1F1F4" stroke="#BDBBB2"/><rect x="6.5" y="0.5" width="4" height="10" fill="#F1F1F4" stroke="#BDBBB2"/></svg>
<svg style="left:331px;top:8px" width="11" height="11" viewBox="0 0 11 11"><rect x="0.5" y="0.5" width="10" height="10" rx="1" fill="#E8303C" stroke="#A52830"/><rect x="1.5" y="1.5" width="8" height="8" fill="none" stroke="#F58C94" stroke-width="1"/></svg>
<svg style="left:353px;top:7px" width="15" height="13" viewBox="0 0 15 13"><g fill="none" stroke="#C6C4BA" stroke-width="1.2"><circle cx="11" cy="2.5" r="2"/><path d="M11,4.5 V10 M3,9 V4 L8,9 V5"/><rect x="1" y="8.5" width="4" height="3.5" fill="#C6C4BA"/><path d="M9.5,10.5 H12.5"/></g></svg>
<svg style="left:376px;top:5px" width="17" height="16" viewBox="0 0 17 16"><path d="M1.5,1.5 H4.5 L7,4 L9.5,1.5 H12.5 V4.5 L10,7 L12.5,9.5 V12.5 H9.5 L7,10 L4.5,12.5 H1.5 V9.5 L4,7 L1.5,4.5 Z" fill="#E6E4DA" stroke="#B9B7AD" stroke-width="1.2"/><path d="M7,7.2 L15,15 M15,7.2 L7,15" stroke="#B2B0A8" stroke-width="3.2" stroke-linecap="butt"/></svg>
<svg style="left:400px;top:5px" width="17" height="17" viewBox="0 0 17 17"><g fill="none" stroke="#8A8878" stroke-width="1.1" stroke-dasharray="2 1.2"><path d="M1,10.5 L9.5,2 L12,4.5 L3.5,13 Z"/><path d="M5,14.5 L13.5,6 L16,8.5 L7.5,17 Z"/></g></svg>
<div style="left:423px;top:4px;width:1px;height:18px;background:#A9A694;"></div>
<svg style="left:433px;top:7px" width="16" height="12" viewBox="0 0 16 12"><path d="M0.5,1.5 H7.5 Q9.5,1.5 9.5,3.5 V6 H11.5 L8,10.5 L4.5,6 H6.5 V4.5 H0.5 Z" fill="#FBE68C" stroke="#B3861A" stroke-width="1" stroke-linejoin="round"/><rect x="0" y="10" width="4" height="2" fill="#3C5675"/><rect x="11" y="10" width="4" height="2" fill="#3C5675"/></svg>
<svg style="left:457px;top:7px" width="16" height="12" viewBox="0 0 16 12"><path d="M0.5,6 C0.5,-1 11.5,-1 12,5 H15 L11,10 L7,5 H9 C8.5,2.5 3.5,2.5 3.5,6 Z" fill="#FBE68C" stroke="#B3861A" stroke-width="1" stroke-linejoin="round"/><rect x="4" y="10" width="4" height="2" fill="#3C5675"/></svg>
<svg style="left:481px;top:6px" width="16" height="13" viewBox="0 0 16 13"><path d="M6.5,12.5 V6.5 Q6.5,3.5 9.5,3.5 H10.5 V0.8 L15,4.8 L10.5,8.8 V6.5 H9.5 V12.5 Z" fill="#FBE68C" stroke="#B3861A" stroke-width="1" stroke-linejoin="round"/><rect x="0" y="11" width="4" height="2" fill="#3C5675"/><rect x="11" y="11" width="4" height="2" fill="#3C5675"/></svg>
<svg style="left:505px;top:5px" width="16" height="16" viewBox="0 0 16 16"><g stroke="#BDBBB0" stroke-width="1" fill="none"><path d="M0,1.5 H12 M0,5.5 H12 M0,9.5 H5"/><path d="M7.5,9 L10,7 L12,9.5 L14.5,8 L15,13 L10.5,14 L11.5,12 Z" fill="#F3F2EC" stroke="#AFAD9F"/></g></svg>
<div style="left:527px;top:4px;width:1px;height:18px;background:#A9A694;"></div>
<svg style="left:536px;top:6px" width="17" height="14" viewBox="0 0 17 14"><g stroke="#C6C4BA" stroke-width="1.2" fill="none"><path d="M1,3.5 H10 V1 L15,4 L10,7 V5 H8 M3,3.5 V8 H6 V10 L9,7.5"/><path d="M0,12.5 H4 M11,12.5 H15" stroke-width="1.6"/></g></svg>
<svg style="left:560px;top:6px" width="16" height="13" viewBox="0 0 16 13"><text x="-0.5" y="12" font-family="Liberation Serif" font-weight="bold" font-size="15.5" fill="#14147A">i</text><path d="M5.5,5.5 H10.5 V2.5 L15.2,6.5 L10.5,10.5 V7.8 H5.5 Z" fill="#C6BE28" stroke="#7C7A12" stroke-width="0.9" stroke-linejoin="round"/></svg>
<svg style="left:584px;top:6px" width="10" height="6" viewBox="0 0 10 6"><path d="M0.5,0.5 H9.5 L5,5 Z" fill="#fff" stroke="#6F6F5F" stroke-width="1"/></svg>
<svg style="left:603px;top:6px" width="10" height="4" viewBox="0 0 10 4" shape-rendering="crispEdges"><rect x="0.5" y="0.5" width="9" height="3" fill="#fff" stroke="#6F6F5F"/></svg>
<svg style="left:621px;top:6px" width="10" height="10" viewBox="0 0 10 10" shape-rendering="crispEdges"><rect x="0.5" y="0.5" width="9" height="9" fill="#fff" stroke="#6F6F5F"/><rect x="0" y="2" width="10" height="1" fill="#6F6F5F"/></svg>
<svg style="left:918px;top:310px" width="10" height="4" viewBox="0 0 10 4" shape-rendering="crispEdges"><rect x="0.5" y="0.5" width="9" height="3" fill="#fff" stroke="#6F6F5F"/></svg>
<svg style="left:936px;top:310px" width="10" height="10" viewBox="0 0 10 10" shape-rendering="crispEdges"><rect x="0.5" y="0.5" width="9" height="9" fill="#fff" stroke="#6F6F5F"/><rect x="0" y="2" width="10" height="1" fill="#6F6F5F"/></svg>
<svg style="left:1068px;top:6px" width="17" height="15" viewBox="0 0 17 15"><rect x="2.5" y="5.5" width="13" height="9" fill="#F6F6FA" stroke="#C8C4A0" stroke-width="1"/><path d="M15.5,6 V14.5 H3" stroke="#E4D890" fill="none"/><text x="0.5" y="9.5" font-family="Liberation Serif" font-style="italic" font-weight="bold" font-size="14" fill="#2C4FA0">x</text><rect x="4" y="11" width="2" height="2" fill="#2C4FA0"/><rect x="7" y="11" width="2" height="2" fill="#2C4FA0"/><rect x="10" y="11" width="2" height="2" fill="#2C4FA0"/></svg>
<svg style="left:1093px;top:6px" width="16" height="14" viewBox="0 0 16 14"><path d="M0.5,5.5 H4 V3.5 L7.5,6.5 L4,9.5 V7.5 H0.5 Z" fill="#FBE27A" stroke="#B8860B" stroke-width="0.9"/><path d="M10,13.5 V2.5" stroke="#3A5E9E" stroke-width="1.3" fill="none"/><path d="M7.8,4 L10,0.8 L12.2,4 Z" fill="#3A5E9E"/><path d="M10,7.5 H12.5 M10,11.8 H12.5" stroke="#6A86B8" stroke-width="1" fill="none"/><rect x="12.4" y="6.1" width="2.6" height="2.6" fill="#FBD4D4" stroke="#D86060" stroke-width="0.9"/><rect x="12.4" y="10.5" width="2.6" height="2.6" fill="#FBD4D4" stroke="#D86060" stroke-width="0.9"/></svg>
<svg style="left:1118px;top:7px" width="14" height="13" viewBox="0 0 14 13"><rect x="0.5" y="0.5" width="9" height="9" fill="#F2F6FB" stroke="#A9BBD0"/><rect x="3.5" y="3.5" width="9" height="9" fill="#E8F0FB" stroke="#8AA0BC"/><rect x="5" y="7.5" width="6" height="1.4" fill="#1E3C78"/></svg>
<div style="left:1139px;top:4px;width:1px;height:18px;background:#A9A694;"></div>
<svg style="left:1150px;top:5px" width="15" height="17" viewBox="0 0 15 17"><defs><radialGradient id="gb" cx="0.35" cy="0.3" r="0.8"><stop offset="0" stop-color="#C4DCCC"/><stop offset="0.55" stop-color="#5A8A70"/><stop offset="1" stop-color="#2A4A3C"/></radialGradient></defs><g fill="none" stroke="#27367C" stroke-width="1.1"><circle cx="5" cy="5.5" r="2"/><circle cx="10.5" cy="5.5" r="2"/><path d="M3,5 C3,1.5 5.5,1 7,1.5 M8.5,5 C8.5,1.5 12,0.5 14.5,2.5"/></g><circle cx="3.8" cy="12.8" r="3.4" fill="url(#gb)"/></svg>
<svg style="left:1174px;top:7px" width="13" height="12" viewBox="0 0 13 12"><path d="M2,1.5 L11,10.5 M11,1.5 L2,10.5" stroke="#B8B6AE" stroke-width="3.2"/></svg>
<svg style="left:1197px;top:4px" width="17" height="17" viewBox="0 0 17 17"><path d="M1.5,1.5 H4.5 L7,4 L9.5,1.5 H12.5 V4.5 L10,7 L12.5,9.5 V12.5 H9.5 L7,10 L4.5,12.5 H1.5 V9.5 L4,7 L1.5,4.5 Z" fill="#E6E4DA" stroke="#8E8E86" stroke-width="1.1"/><path d="M6.5,7.5 L15,16 M15,7.5 L6.5,16" stroke="#777772" stroke-width="3.1"/></svg>
<svg style="left:644px;top:7px" width="18" height="12" viewBox="0 0 18 12"><g fill="none" stroke-linecap="round"><path d="M3.2,0.8 C0.8,3.5 0.8,7.5 3.2,10.2" stroke="#2B3D6B" stroke-width="1.7"/><path d="M9.8,0.8 C12.2,3.5 12.2,7.5 9.8,10.2" stroke="#2B3D6B" stroke-width="1.7"/><path d="M4.6,3.4 L8.4,7.8 M8.4,3.4 L4.6,7.8" stroke="#46698C" stroke-width="1.5"/><path d="M13.5,4.2 H17 M13.5,6.8 H17" stroke="#333" stroke-width="1.1"/></g></svg>
<svg style="left:11px;top:310px" width="11" height="14" viewBox="0 0 11 14"><path d="M0.5,0.5 H7 L10.5,4 V13.5 H0.5 Z" fill="#FDFDFD" stroke="#8E8E80" stroke-width="1"/><path d="M7,0.5 V4 H10.5 Z" fill="#F0D878" stroke="#A89850" stroke-width="0.8"/><rect x="1.6" y="10" width="1.4" height="1.6" fill="#3A5E9E"/><path d="M8.8,6.4 C7.8,4.8 4.2,5 4.2,8.3 C4.2,11.6 7.8,11.8 8.8,10.2" fill="none" stroke="#2E5AA8" stroke-width="1.8"/></svg>
<svg style="left:105px;top:310px" width="11" height="14" viewBox="0 0 11 14"><path d="M0.5,0.5 H7 L10.5,4 V13.5 H0.5 Z" fill="#FDFDFD" stroke="#8E8E80" stroke-width="1"/><path d="M7,0.5 V4 H10.5 Z" fill="#F0D878" stroke="#A89850" stroke-width="0.8"/><rect x="1.6" y="10" width="1.4" height="1.6" fill="#3A5E9E"/><path d="M8.6,4.6 C7.4,2.8 4,3.4 4.3,5.6 C4.6,7.8 8.6,7.2 8.8,9.6 C9,12 5,12.4 3.8,10.4" fill="none" stroke="#2E4E8E" stroke-width="1.7"/></svg>
<svg style="left:962px;top:309px" width="14" height="15" viewBox="0 0 14 15" shape-rendering="crispEdges"><g fill="#E8F2FC" stroke="#3C7CC0" stroke-width="1"><rect x="0.5" y="0.5" width="4" height="4"/><rect x="0.5" y="9.5" width="4" height="4"/></g><g fill="#3C7CC0"><rect x="6" y="2" width="7" height="1"/><rect x="6" y="6" width="3" height="1"/><rect x="10" y="6" width="2" height="1"/><rect x="6" y="8" width="3" height="1"/><rect x="6" y="11" width="7" height="1"/><rect x="6" y="5" width="1" height="4"/></g></svg>
<svg style="left:11px;top:707px" width="11" height="12" viewBox="0 0 11 12"><rect x="0" y="0" width="11" height="8" fill="#F4F7FC"/><rect x="1.5" y="2" width="6" height="1.2" fill="#1C2C64"/><rect x="1.5" y="4.5" width="8" height="1.2" fill="#1C2C64"/><rect x="0" y="8" width="11" height="1.4" fill="#1A3A8A"/><rect x="1" y="10" width="9" height="1.4" fill="#123080"/></svg>
<svg style="left:1123px;top:309px" width="19" height="17" viewBox="0 0 19 17"><path d="M3.5,2 V14" stroke="#5C5C5C" stroke-width="1.2" fill="none"/><path d="M1,11.5 L3.5,15 L6,11.5 Z" fill="#5C5C5C"/><text x="5.5" y="7.6" font-family="Liberation Sans" font-weight="bold" font-size="11.5" fill="#2E8B72">a</text><text x="10.5" y="15.8" font-family="Liberation Sans" font-weight="bold" font-size="12" fill="#7A2A7A">z</text></svg>
<svg style="left:1148px;top:309px" width="16" height="16" viewBox="0 0 16 16"><rect x="3" y="2" width="11" height="10.5" rx="3.5" fill="#4A98DC" stroke="#7AB8EC" stroke-width="1"/><rect x="6" y="4.5" width="5" height="5" rx="1.5" fill="#9CCBF2"/><path d="M1,1 L15,14.5" stroke="#18264C" stroke-width="1.5"/></svg>
<svg style="left:1172px;top:309px" width="16" height="17" viewBox="0 0 16 17"><circle cx="6.3" cy="9.8" r="3.5" fill="#8C96A6" stroke="#A8B0BC" stroke-width="0.8"/><path d="M1,5 L12,16" stroke="#18264C" stroke-width="1.5"/><text x="9.2" y="7.6" font-family="Liberation Sans" font-weight="bold" font-size="8.6" fill="#D83030">S</text></svg>
<svg style="left:1199px;top:312px" width="10" height="10" viewBox="0 0 10 10"><circle cx="5" cy="5" r="3.8" fill="#62B26C" stroke="#3C8C4A" stroke-width="1"/></svg>
<svg style="left:989px;top:331px" width="11" height="10" viewBox="0 0 11 10" shape-rendering="crispEdges"><rect x="0" y="0" width="5" height="4" fill="#2F68B0"/><path d="M7,0 H11 V10 H1 V6 H7 Z" fill="#2F68B0"/><rect x="7" y="0" width="4" height="1" fill="#6FA0D8"/></svg>
<svg style="left:987px;top:352px" width="11" height="11" viewBox="0 0 11 11"><g stroke="#2F68B0" stroke-width="1.9" fill="none"><path d="M4.2,0.3 L2.6,10.7 M8.6,0.3 L7,10.7 M0.6,3.6 H10.6 M0.2,7.4 H10.2"/></g></svg>
<svg style="left:987px;top:369px" width="11" height="11" viewBox="0 0 11 11"><g stroke="#2F68B0" stroke-width="1.9" fill="none"><path d="M4.2,0.3 L2.6,10.7 M8.6,0.3 L7,10.7 M0.6,3.6 H10.6 M0.2,7.4 H10.2"/></g></svg>
<svg style="left:987px;top:386px" width="11" height="11" viewBox="0 0 11 11"><g stroke="#2F68B0" stroke-width="1.9" fill="none"><path d="M4.2,0.3 L2.6,10.7 M8.6,0.3 L7,10.7 M0.6,3.6 H10.6 M0.2,7.4 H10.2"/></g></svg>
<svg style="left:987px;top:403px" width="11" height="11" viewBox="0 0 11 11"><g stroke="#2F68B0" stroke-width="1.9" fill="none"><path d="M4.2,0.3 L2.6,10.7 M8.6,0.3 L7,10.7 M0.6,3.6 H10.6 M0.2,7.4 H10.2"/></g></svg>
<svg style="left:986px;top:418px" width="13" height="15" viewBox="0 0 13 15" shape-rendering="crispEdges"><g fill="#54896E"><rect x="0" y="7" width="13" height="1"/><rect x="3" y="2" width="1" height="10"/><rect x="9" y="2" width="1" height="10"/><rect x="6" y="0" width="1" height="1"/><rect x="6" y="13" width="1" height="1"/></g></svg>
<svg style="left:986px;top:435px" width="13" height="15" viewBox="0 0 13 15" shape-rendering="crispEdges"><g fill="#54896E"><rect x="0" y="7" width="13" height="1"/><rect x="3" y="2" width="1" height="10"/><rect x="9" y="2" width="1" height="10"/><rect x="6" y="0" width="1" height="1"/><rect x="6" y="13" width="1" height="1"/></g></svg>
<svg style="left:986px;top:452px" width="13" height="15" viewBox="0 0 13 15" shape-rendering="crispEdges"><g fill="#54896E"><rect x="0" y="7" width="13" height="1"/><rect x="3" y="2" width="1" height="10"/><rect x="9" y="2" width="1" height="10"/><rect x="6" y="0" width="1" height="1"/><rect x="6" y="13" width="1" height="1"/></g></svg>
<svg style="left:986px;top:469px" width="13" height="15" viewBox="0 0 13 15" shape-rendering="crispEdges"><g fill="#54896E"><rect x="0" y="7" width="13" height="1"/><rect x="3" y="2" width="1" height="10"/><rect x="9" y="2" width="1" height="10"/><rect x="6" y="0" width="1" height="1"/><rect x="6" y="13" width="1" height="1"/></g></svg>
<svg style="left:986px;top:486px" width="13" height="15" viewBox="0 0 13 15" shape-rendering="crispEdges"><g fill="#54896E"><rect x="0" y="7" width="13" height="1"/><rect x="3" y="2" width="1" height="10"/><rect x="9" y="2" width="1" height="10"/><rect x="6" y="0" width="1" height="1"/><rect x="6" y="13" width="1" height="1"/></g></svg>
<svg style="left:986px;top:503px" width="13" height="15" viewBox="0 0 13 15" shape-rendering="crispEdges"><g fill="#54896E"><rect x="0" y="7" width="13" height="1"/><rect x="3" y="2" width="1" height="10"/><rect x="9" y="2" width="1" height="10"/><rect x="6" y="0" width="1" height="1"/><rect x="6" y="13" width="1" height="1"/></g></svg>
<svg style="left:986px;top:520px" width="13" height="15" viewBox="0 0 13 15" shape-rendering="crispEdges"><g fill="#54896E"><rect x="0" y="7" width="13" height="1"/><rect x="3" y="2" width="1" height="10"/><rect x="9" y="2" width="1" height="10"/><rect x="6" y="0" width="1" height="1"/><rect x="6" y="13" width="1" height="1"/></g></svg>
<svg style="left:986px;top:537px" width="13" height="15" viewBox="0 0 13 15" shape-rendering="crispEdges"><g fill="#54896E"><rect x="0" y="7" width="13" height="1"/><rect x="3" y="2" width="1" height="10"/><rect x="9" y="2" width="1" height="10"/><rect x="6" y="0" width="1" height="1"/><rect x="6" y="13" width="1" height="1"/></g></svg>
<svg style="left:986px;top:554px" width="13" height="15" viewBox="0 0 13 15" shape-rendering="crispEdges"><g fill="#54896E"><rect x="0" y="7" width="13" height="1"/><rect x="3" y="2" width="1" height="10"/><rect x="9" y="2" width="1" height="10"/><rect x="6" y="0" width="1" height="1"/><rect x="6" y="13" width="1" height="1"/></g></svg>
<svg style="left:986px;top:571px" width="13" height="15" viewBox="0 0 13 15" shape-rendering="crispEdges"><g fill="#54896E"><rect x="0" y="7" width="13" height="1"/><rect x="3" y="2" width="1" height="10"/><rect x="9" y="2" width="1" height="10"/><rect x="6" y="0" width="1" height="1"/><rect x="6" y="13" width="1" height="1"/></g></svg>
<svg style="left:987px;top:590px" width="10" height="10" viewBox="0 0 10 10"><circle cx="5" cy="5" r="3.2" fill="#62B26C" stroke="#3C8C4A" stroke-width="1"/></svg>
<svg style="left:987px;top:607px" width="10" height="10" viewBox="0 0 10 10"><circle cx="5" cy="5" r="3.2" fill="#62B26C" stroke="#3C8C4A" stroke-width="1"/></svg>
<svg style="left:987px;top:624px" width="10" height="10" viewBox="0 0 10 10"><circle cx="5" cy="5" r="3.2" fill="#62B26C" stroke="#3C8C4A" stroke-width="1"/></svg>
<svg style="left:987px;top:641px" width="10" height="10" viewBox="0 0 10 10"><circle cx="5" cy="5" r="3.2" fill="#62B26C" stroke="#3C8C4A" stroke-width="1"/></svg>
<svg style="left:987px;top:658px" width="10" height="10" viewBox="0 0 10 10"><circle cx="5" cy="5" r="3.2" fill="#62B26C" stroke="#3C8C4A" stroke-width="1"/></svg>
<svg style="left:987px;top:675px" width="10" height="10" viewBox="0 0 10 10"><circle cx="5" cy="5" r="3.2" fill="#62B26C" stroke="#3C8C4A" stroke-width="1"/></svg>
<div style="left:985px;top:690px;width:14px;height:4px;overflow:hidden;"><svg style="left:2px;top:0" width="10" height="10"><circle cx="5" cy="5" r="3.2" fill="#62B26C" stroke="#3C8C4A"/></svg></div>
<svg style="left:1007px;top:708px" width="11" height="11" viewBox="0 0 11 11"><rect x="0.5" y="0.5" width="10" height="10" rx="1" fill="#E8303C" stroke="#A52830"/><rect x="1.5" y="1.5" width="8" height="8" fill="none" stroke="#F58C94" stroke-width="1"/></svg>
<svg style="left:1030px;top:707px" width="13" height="12" viewBox="0 0 13 12"><path d="M2,1.5 L11,10.5 M11,1.5 L2,10.5" stroke="#B4B2AA" stroke-width="3.2"/></svg>
<svg style="left:1052px;top:704px" width="17" height="16" viewBox="0 0 17 16"><path d="M1.5,1.5 H4.5 L7,4 L9.5,1.5 H12.5 V4.5 L10,7 L12.5,9.5 V12.5 H9.5 L7,10 L4.5,12.5 H1.5 V9.5 L4,7 L1.5,4.5 Z" fill="#E6E4DA" stroke="#B9B7AD" stroke-width="1.2"/><path d="M7,7.2 L15,15 M15,7.2 L7,15" stroke="#B2B0A8" stroke-width="3.2" stroke-linecap="butt"/></svg>
<div style="left:1075px;top:704px;width:1px;height:18px;background:#A9A694;"></div>
<svg style="left:1085px;top:705px" width="16" height="16" viewBox="0 0 16 16"><path d="M0.5,0.5 H7.5 L10.5,3.5 V13.5 H0.5 Z" fill="#FCFCFC" stroke="#9A9884" stroke-width="1"/><path d="M7.5,0.5 V3.5 H10.5" fill="#EDE2A0" stroke="#9A9884" stroke-width="0.8"/><g stroke="#5C88D0" stroke-width="1"><path d="M2,4.5 H6 M2,6.5 H8.5 M2,8.5 H8.5 M2,10.5 H7 M2,12 H6"/></g><path d="M9,9 L15,15 M15,9 L9,15" stroke="#3A3E48" stroke-width="2.6"/></svg>
<svg style="left:1109px;top:705px" width="16" height="16" viewBox="0 0 16 16"><rect x="1.5" y="0.5" width="13" height="13" fill="#F4F6FA" stroke="#8C9CB4" stroke-width="1"/><rect x="10.5" y="0.5" width="4" height="13" fill="#DCE6F4" stroke="#7C90B0"/><rect x="11.7" y="2" width="1.6" height="2" fill="#3C6CB8"/><rect x="11.7" y="6" width="1.6" height="2" fill="#7CA0D8"/><rect x="11.7" y="10" width="1.6" height="2" fill="#3C6CB8"/><path d="M2.2,9 V7.3 C2.2,5 6.6,5 6.6,7.3 V9" fill="none" stroke="#B8962C" stroke-width="1.4"/><rect x="0.6" y="8.6" width="7.6" height="6" rx="1" fill="#F6D86A" stroke="#B08A20" stroke-width="1"/><rect x="3.7" y="10.6" width="1.5" height="2" fill="#6A5410"/></svg>
<div style="left:1131px;top:704px;width:1px;height:18px;background:#A9A694;"></div>
<svg style="left:1142px;top:705px" width="16" height="16" viewBox="0 0 16 16"><rect x="0.5" y="5.5" width="11" height="9" fill="#F4F7FC" stroke="#7C8EA8" stroke-width="1"/><rect x="0.5" y="5.5" width="11" height="1" fill="#5C80B8"/><rect x="1" y="7.2" width="10" height="0.9" fill="#8CA8D0"/><path d="M6,10.2 L9,7.2" stroke="#1E4A2C" stroke-width="1.3"/><path d="M8.2,5.6 L11.6,1.6 L14.2,4.2 L10.4,7.8 Z" fill="#58B86C" stroke="#2A8A42" stroke-width="0.9"/><path d="M10.2,4.4 L11.8,3 M11.4,5.6 L12.8,4.2" stroke="#A8E0B0" stroke-width="0.7"/></svg>
<svg style="left:1166px;top:705px" width="14" height="15" viewBox="0 0 14 15"><rect x="0.9" y="1.9" width="11.6" height="8.8" fill="#EAF0FB" stroke="#2A5492" stroke-width="1.8"/><rect x="3" y="4.4" width="4" height="1.1" fill="#2C3C80"/><rect x="3" y="6.6" width="7" height="1.1" fill="#2C3C80"/><rect x="5" y="11.6" width="4" height="1.2" fill="#2A5492"/><rect x="2" y="12.8" width="10" height="1.3" fill="#2A5492"/></svg>
<svg style="left:1187px;top:712px" width="7" height="4" viewBox="0 0 7 4"><path d="M0,0 H7 L3.5,3.7 Z" fill="#000"/></svg>
<svg style="left:1201px;top:705px" width="17" height="16" viewBox="0 0 17 16"><rect x="1.5" y="3.5" width="13" height="11" fill="#F6F8FC" stroke="#8C9AAC" stroke-width="1"/><rect x="1.5" y="3.5" width="9" height="1" fill="#5C80B8"/><rect x="2" y="5.2" width="8" height="0.9" fill="#8CA8D0"/><path d="M12.8,0.6 V7.6 M9.3,4.1 H16.3" stroke="#C0902A" stroke-width="2.6"/><path d="M12.8,1.4 V6.8 M10.1,4.1 H15.5" stroke="#FFF0B0" stroke-width="1"/></svg>
<svg style="left:5px;top:436px" width="10" height="10" viewBox="0 0 10 10"><path d="M0.5,3.5 H4.5 V1 L9,5 L4.5,9 V6.5 H0.5 Z" fill="#8CB4F0" stroke="#2C5CA8" stroke-width="1" stroke-linejoin="round"/></svg>
<div style="left:901px;top:896px;width:110px;height:2px;background:#ECE9D8;border-top:1px solid #8A8674;border-left:1px solid #8A8674;"></div>
<div style="left:902px;top:897px;width:30px;height:1px;background:#fff;"></div>
<div style="left:932px;top:896px;width:1px;height:2px;background:#8A8674;"></div>
<div style="left:996px;top:896px;width:1px;height:2px;background:#8A8674;"></div>
<div style="left:1010px;top:896px;width:1px;height:2px;background:#fff;"></div>
<div style="left:1027px;top:896px;width:1px;height:2px;background:#8A8674;"></div>
</div></body></html>
